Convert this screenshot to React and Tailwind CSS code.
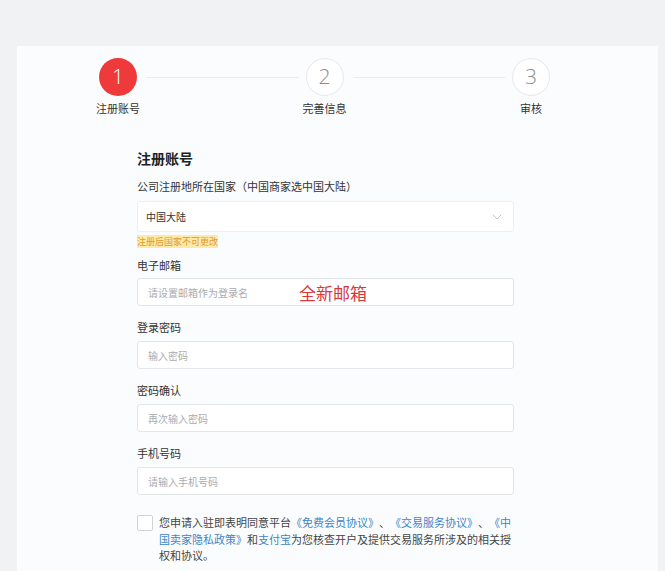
import { ChevronDown } from 'lucide-react'

const STEPS = [
  { n: 1, label: '注册账号', active: true },
  { n: 2, label: '完善信息' },
  { n: 3, label: '审核' },
]

const FIELDS = [
  { label: '登录密码', placeholder: '输入密码' },
  { label: '密码确认', placeholder: '再次输入密码' },
  { label: '手机号码', placeholder: '请输入手机号码' },
]

function Step({ step }) {
  return (
    <div className="w-[80px] flex flex-col items-center shrink-0 relative z-10">
      <div
        className={`w-[38px] h-[38px] rounded-full flex items-center justify-center text-[21px] font-light font-['Open_Sans',sans-serif] ${
          step.active ? 'bg-[#ee3a3a] text-white' : 'bg-white border border-[#e6e8eb] text-[#8a8d92]'
        }`}
      >
        {step.n}
      </div>
      <div className="mt-[5px] text-[11px] leading-[14px] text-[#333]">{step.label}</div>
    </div>
  )
}

function Field({ label, placeholder, children }) {
  return (
    <div className="mt-[14px]">
      <div className="text-[11px] leading-[14px] text-[#333]">{label}</div>
      <div className="relative mt-[7px] h-[28px] flex items-center px-[10px] bg-white border border-[#e2e5e9] rounded-[3px]">
        <span className="text-[10px] text-[#a9acb1]">{placeholder}</span>
        {children}
      </div>
    </div>
  )
}

export default function App() {
  return (
    <div className="min-h-[571px] bg-[#f1f2f4] pt-[46px] pl-[17px] pr-[7px] font-['Noto_Sans_CJK_SC',sans-serif] overflow-hidden">
      <div className="bg-[#fbfcfd] h-[525px] pt-[12px] pl-[61px] pr-[87px]">

        {/* Steps */}
        <div className="flex items-start">
          <Step step={STEPS[0]} />
          <div className="flex-1 h-px bg-[#e8eaed] mt-[19px] -ml-[12px] -mr-[14px]" />
          <Step step={STEPS[1]} />
          <div className="flex-1 h-px bg-[#e8eaed] mt-[19px] -ml-[12px] -mr-[14px]" />
          <Step step={STEPS[2]} />
        </div>

        {/* Form */}
        <div className="ml-[59px] w-[377px] mt-[33px]">
          <h2 className="text-[14px] leading-[20px] font-bold text-[#222]">注册账号</h2>

          <div className="mt-[11px] text-[11px] leading-[14px] text-[#333]">公司注册地所在国家（中国商家选中国大陆）</div>
          <div className="mt-[8px] h-[31px] flex items-center justify-between pl-[8px] pr-[8px] bg-white border border-[#eceef1] rounded-[3px]">
            <span className="text-[10px] text-[#333]">中国大陆</span>
            <ChevronDown className="w-[16px] h-[16px] text-[#b5b8bd]" strokeWidth={1.2} />
          </div>
          <div className="mt-[1px] leading-[11px]">
            <span className="text-[9px] text-[#e39a2d] bg-[#fde9a8]">注册后国家不可更改</span>
          </div>

          <div className="mt-[11px] text-[11px] leading-[14px] text-[#333]">电子邮箱</div>
          <div className="relative mt-[6px] h-[28px] flex items-center px-[10px] bg-white border border-[#e2e5e9] rounded-[3px]">
            <span className="text-[10px] text-[#a9acb1]">请设置邮箱作为登录名</span>
            <span className="absolute left-[161px] top-[3px] text-[17px] leading-[22px] text-[#d8373c]">全新邮箱</span>
          </div>

          {FIELDS.map(f => (
            <Field key={f.label} label={f.label} placeholder={f.placeholder} />
          ))}

          {/* Agreement */}
          <div className="mt-[19px] flex items-start gap-[6px]">
            <div className="w-[16px] h-[16px] mt-[1px] shrink-0 border border-[#cfd2d6] rounded-[2px] bg-white" />
            <p className="w-[355px] text-[11px] leading-[16.5px] text-[#444] [text-spacing-trim:space-all]">
              您申请入驻即表明同意平台<span className="text-[#3d86c6]">《免费会员协议》</span>、<span className="text-[#3d86c6]">《交易服务协议》</span>、<span className="text-[#3d86c6]">《中国卖家隐私政策》</span>和<span className="text-[#3d86c6]">支付宝</span>为您核查开户及提供交易服务所涉及的相关授权和协议。
            </p>
          </div>
        </div>
      </div>
    </div>
  )
}
